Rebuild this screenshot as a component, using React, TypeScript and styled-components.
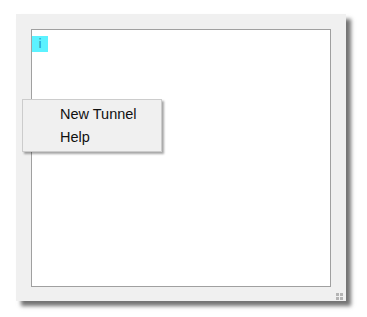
import React from "react";
import styled, { createGlobalStyle } from "styled-components";

const Global = createGlobalStyle`
  html, body { margin: 0; padding: 0; background: #ffffff; }
  body { font-family: "Liberation Sans", Arial, sans-serif; }
`;

const Page = styled.div`
  position: relative;
  width: 367px;
  height: 317px;
  padding: 14px 0 0 16px;
  box-sizing: border-box;
`;

const Window = styled.div`
  position: relative;
  width: 330px;
  height: 287px;
  box-sizing: border-box;
  padding: 15px 15px 14px 15px;
  background: #f0f0f0;
  box-shadow: 5px 5px 4px rgba(0, 0, 0, 0.55);
`;

const Canvas = styled.div`
  width: 300px;
  height: 258px;
  box-sizing: border-box;
  border: 1px solid #a0a0a0;
  background: #ffffff;
  padding-top: 6px;
`;

const InfoBadge = styled.div`
  width: 16px;
  height: 16px;
  background: #5cf2ff;
  display: flex;
  align-items: center;
  justify-content: center;
  color: #2496b8;
  font-size: 13px;
  line-height: 16px;
  font-family: "DejaVu Sans", sans-serif;
`;

const Grip = styled.div`
  position: absolute;
  right: 3px;
  bottom: 1px;
  display: grid;
  grid-template-columns: 3px 3px;
  grid-template-rows: 3px 3px;
  gap: 1px;
`;

const GripDot = styled.span`
  background: #b4b4b4;
`;

const Menu = styled.div`
  position: absolute;
  left: 22px;
  top: 99px;
  width: 140px;
  box-sizing: border-box;
  padding: 3px 2px 2px;
  background: #f0f0f0;
  border: 1px solid #cccccc;
  box-shadow: 2px 2px 2px rgba(0, 0, 0, 0.35);
  display: flex;
  flex-direction: column;
`;

const MenuItem = styled.div`
  height: 23px;
  padding-left: 35px;
  font-size: 14.5px;
  line-height: 23px;
  color: #111111;
`;

export default function App() {
  return (
    <Page>
      <Global />
      <Window>
        <Canvas>
          <InfoBadge>i</InfoBadge>
        </Canvas>
        <Grip>
          <GripDot />
          <GripDot />
          <GripDot />
          <GripDot />
        </Grip>
      </Window>
      <Menu>
        <MenuItem>New Tunnel</MenuItem>
        <MenuItem>Help</MenuItem>
      </Menu>
    </Page>
  );
}
